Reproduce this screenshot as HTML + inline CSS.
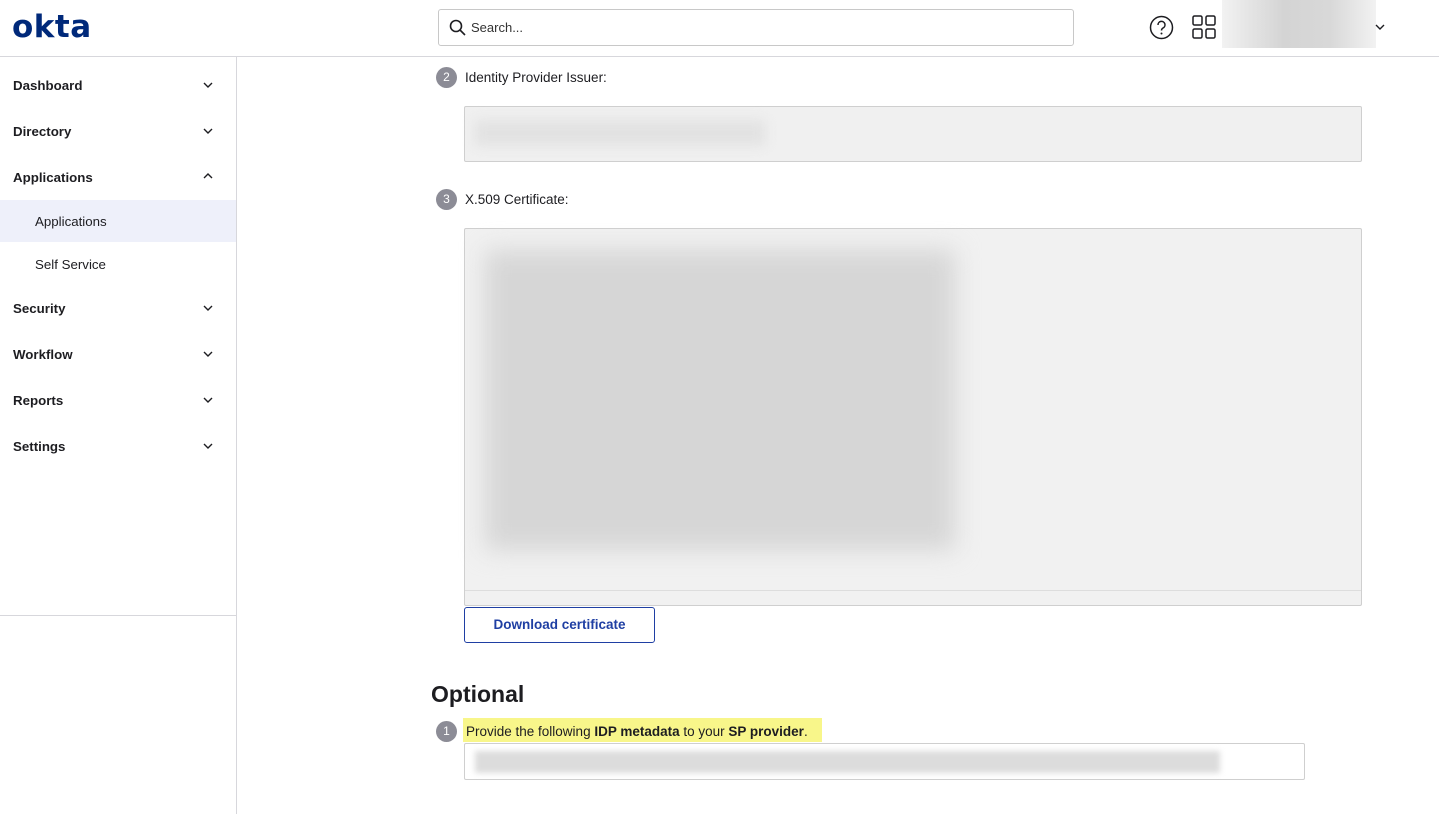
<!DOCTYPE html>
<html><head><style>
*{box-sizing:border-box;margin:0;padding:0}
body{width:1439px;height:814px;background:#fff;font-family:"Liberation Sans",sans-serif;color:#1d1d21;position:relative;overflow:hidden}
.abs{position:absolute}
.nav{font-size:13.3px;font-weight:bold;left:13px}
.chev{left:202px;width:12px;height:8px}
.num{width:21px;height:21px;border-radius:50%;background:#8c8c96;color:#fff;font-size:12px;text-align:center;line-height:21px}
</style></head><body>
<div class="abs" style="left:12px;top:12px;font-size:31px;font-weight:bold;color:#00297a;letter-spacing:0.5px;line-height:30px;font-family:'DejaVu Sans',sans-serif">okta</div>
<div class="abs" style="left:438px;top:9px;width:636px;height:37px;border:1px solid #c8c8c8;border-radius:3px"></div>
<svg class="abs" style="left:449px;top:19px" width="18" height="18" viewBox="0 0 18 18"><circle cx="7" cy="7" r="5.5" fill="none" stroke="#1d1d21" stroke-width="1.6"/><path d="M11 11l5 5" stroke="#1d1d21" stroke-width="1.6"/></svg>
<div class="abs" style="left:471px;top:20px;font-size:13px;color:#333">Search...</div>
<svg class="abs" style="left:1149px;top:15px" width="25" height="25" viewBox="0 0 25 25"><circle cx="12.5" cy="12.5" r="11" fill="none" stroke="#1d1d21" stroke-width="1.5"/><path d="M9 10a3.5 3.5 0 1 1 5 3c-1 .6-1.5 1.2-1.5 2.5" fill="none" stroke="#1d1d21" stroke-width="1.5"/><circle cx="12.5" cy="18.5" r="1" fill="#1d1d21"/></svg>
<svg class="abs" style="left:1192px;top:15px" width="24" height="24" viewBox="0 0 24 24" fill="none" stroke="#1d1d21" stroke-width="1.5"><rect x="1" y="1" width="9" height="9" rx="1.5"/><rect x="14" y="1" width="9" height="9" rx="1.5"/><rect x="1" y="14" width="9" height="9" rx="1.5"/><rect x="14" y="14" width="9" height="9" rx="1.5"/></svg>
<div class="abs" style="left:1222px;top:0;width:154px;height:48px;background:linear-gradient(90deg,#f2f2f2,#d4d4d4 40%,#d8d8d8 70%,#f2f2f2)"></div>
<svg class="abs" style="left:1375px;top:24px" width="10" height="7" viewBox="0 0 10 7"><path d="M1 1l4 4 4-4" fill="none" stroke="#1d1d21" stroke-width="1.4"/></svg>
<div class="abs" style="left:0;top:56px;width:1439px;height:1px;background:#d7d7dc"></div>
<div class="abs" style="left:236px;top:57px;width:1px;height:757px;background:#d7d7dc"></div>
<div class="abs" style="left:0;top:615px;width:236px;height:1px;background:#d7d7dc"></div>
<div class="abs" style="left:0;top:200px;width:236px;height:42px;background:#eef0fa"></div>
<div class="abs nav" style="top:78px">Dashboard</div>
<div class="abs nav" style="top:124px">Directory</div>
<div class="abs nav" style="top:170px">Applications</div>
<div class="abs" style="left:35px;top:214px;font-size:13.3px">Applications</div>
<div class="abs" style="left:35px;top:257px;font-size:13.3px">Self Service</div>
<div class="abs nav" style="top:301px">Security</div>
<div class="abs nav" style="top:347px">Workflow</div>
<div class="abs nav" style="top:393px">Reports</div>
<div class="abs nav" style="top:439px">Settings</div>
<svg class="abs chev" style="top:81px" viewBox="0 0 12 8"><path d="M2 2l4 4 4-4" fill="none" stroke="#1d1d21" stroke-width="1.4"/></svg>
<svg class="abs chev" style="top:127px" viewBox="0 0 12 8"><path d="M2 2l4 4 4-4" fill="none" stroke="#1d1d21" stroke-width="1.4"/></svg>
<svg class="abs chev" style="top:172px" viewBox="0 0 12 8"><path d="M2 6l4-4 4 4" fill="none" stroke="#1d1d21" stroke-width="1.4"/></svg>
<svg class="abs chev" style="top:304px" viewBox="0 0 12 8"><path d="M2 2l4 4 4-4" fill="none" stroke="#1d1d21" stroke-width="1.4"/></svg>
<svg class="abs chev" style="top:350px" viewBox="0 0 12 8"><path d="M2 2l4 4 4-4" fill="none" stroke="#1d1d21" stroke-width="1.4"/></svg>
<svg class="abs chev" style="top:396px" viewBox="0 0 12 8"><path d="M2 2l4 4 4-4" fill="none" stroke="#1d1d21" stroke-width="1.4"/></svg>
<svg class="abs chev" style="top:442px" viewBox="0 0 12 8"><path d="M2 2l4 4 4-4" fill="none" stroke="#1d1d21" stroke-width="1.4"/></svg>

<div class="abs num" style="left:436px;top:67px">2</div>
<div class="abs" style="left:465px;top:70px;font-size:13.5px">Identity Provider Issuer:</div>
<div class="abs" style="left:464px;top:106px;width:898px;height:56px;border:1px solid #cfcfcf;border-radius:2px;background:#f0f0f0"></div>
<div class="abs" style="left:475px;top:120px;width:290px;height:26px;background:#e2e2e2;filter:blur(6px)"></div>
<div class="abs num" style="left:436px;top:189px">3</div>
<div class="abs" style="left:465px;top:192px;font-size:13.5px">X.509 Certificate:</div>
<div class="abs" style="left:464px;top:228px;width:898px;height:378px;border:1px solid #cfcfcf;border-radius:2px;background:#f1f1f1"></div>
<div class="abs" style="left:485px;top:250px;width:470px;height:300px;background:#d6d6d6;filter:blur(12px)"></div>
<div class="abs" style="left:465px;top:590px;width:896px;height:1px;background:#ddd"></div>
<div class="abs" style="left:464px;top:607px;width:191px;height:36px;border:1px solid #1f3fa3;border-radius:3px;color:#1f3fa3;font-size:13.5px;font-weight:bold;text-align:center;line-height:34px">Download certificate</div>
<div class="abs" style="left:431px;top:681px;font-size:23px;font-weight:bold">Optional</div>
<div class="abs num" style="left:436px;top:721px">1</div>
<div class="abs" style="left:463px;top:718px;width:359px;height:24px;background:#f8f68a"></div>
<div class="abs" style="left:466px;top:724px;font-size:13.5px">Provide the following <b>IDP metadata</b> to your <b>SP provider</b>.</div>
<div class="abs" style="left:464px;top:743px;width:841px;height:37px;border:1px solid #cfcfcf;border-radius:2px;background:#fff"></div>
<div class="abs" style="left:475px;top:751px;width:745px;height:22px;background:#dcdcdc;filter:blur(3px)"></div>
</body></html>
